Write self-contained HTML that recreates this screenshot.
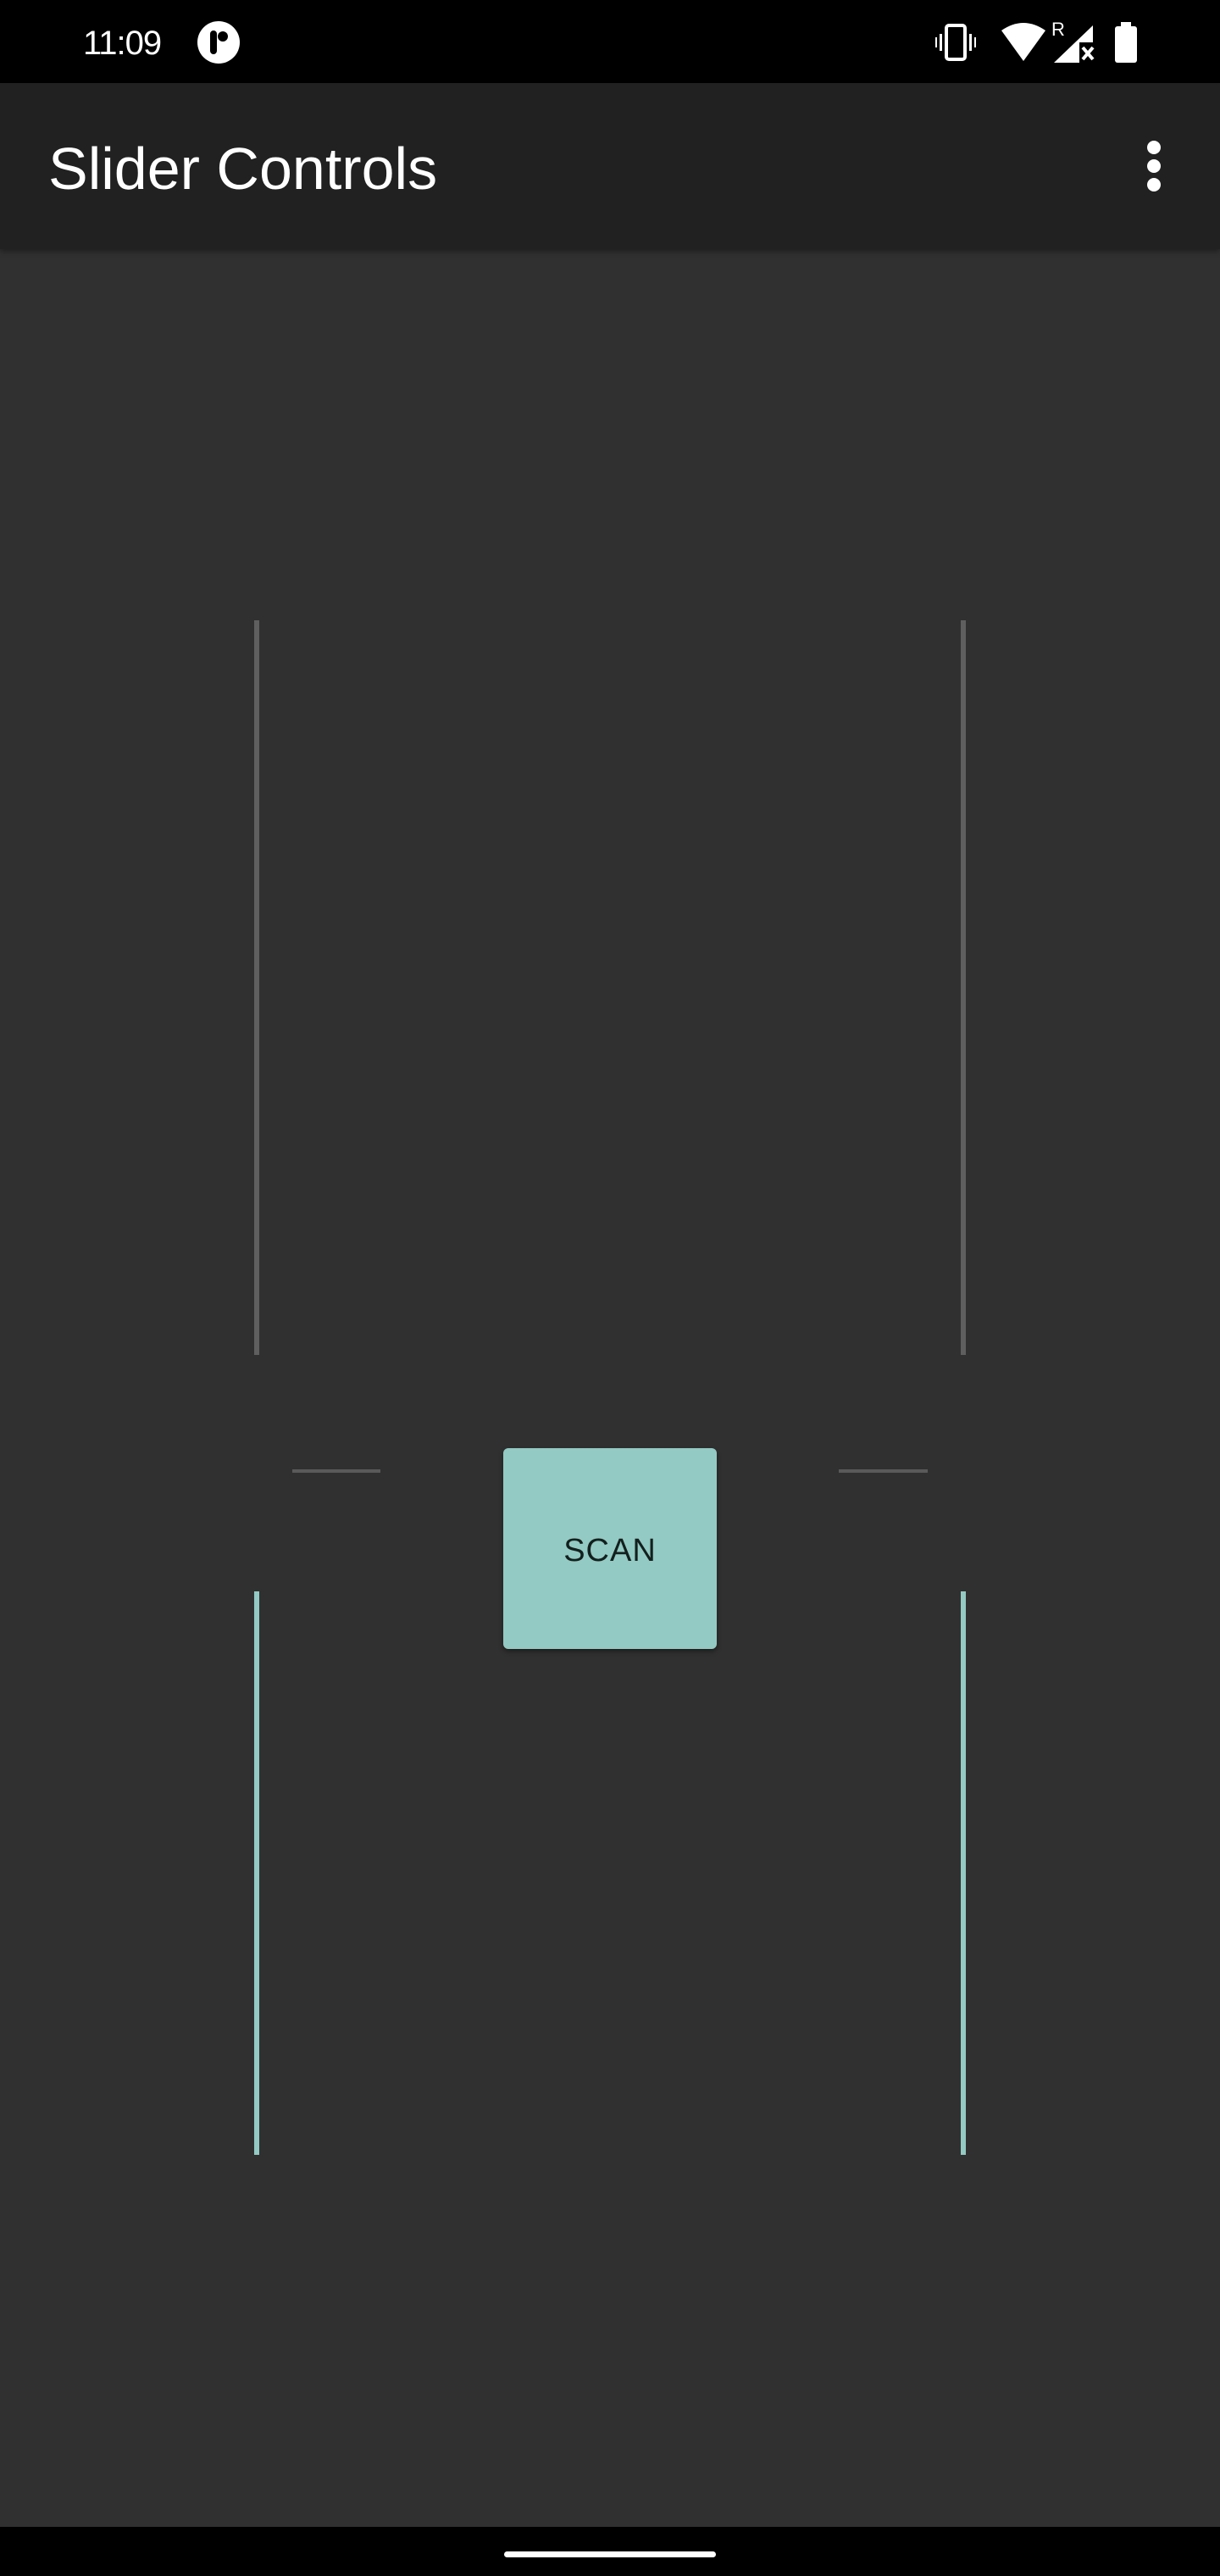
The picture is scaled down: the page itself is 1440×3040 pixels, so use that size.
<!DOCTYPE html>
<html><head><meta charset="utf-8"><style>
html,body{margin:0;padding:0}
body{width:1440px;height:3040px;background:#303030;position:relative;overflow:hidden;font-family:"Liberation Sans",sans-serif}
.a{position:absolute}
</style></head><body>
<div class="a" style="left:0;top:0;width:1440px;height:98px;background:#000"></div>
<div class="a" style="left:98px;top:28px;color:#fff;font-size:40px;line-height:46px;letter-spacing:-1px">11:09</div>
<svg class="a" style="left:232px;top:24px" width="52" height="52" viewBox="0 0 52 52"><circle cx="26" cy="26" r="25" fill="#fff"/><rect x="16" y="12" width="8" height="28" rx="4" fill="#000"/><circle cx="31" cy="19" r="6" fill="#000"/></svg>
<svg class="a" style="left:1104px;top:26px" width="48" height="48" viewBox="0 0 48 48" fill="#fff"><rect x="13" y="4" width="22" height="40" rx="3" fill="none" stroke="#fff" stroke-width="4"/><rect x="5" y="14" width="3" height="20"/><rect x="40" y="14" width="3" height="20"/><rect x="0" y="18" width="2" height="12"/><rect x="46" y="18" width="2" height="12"/></svg>
<svg class="a" style="left:1180px;top:26px" width="56" height="48" viewBox="0 0 56 48"><path d="M2 10 Q28 -8 54 10 L28 46 Z" fill="#fff"/></svg>
<div class="a" style="left:1241px;top:22px;color:#fff;font-size:22px">R</div>
<svg class="a" style="left:1244px;top:30px" width="50" height="44" viewBox="0 0 50 44"><path d="M46 0 L46 20 L30 20 L30 44 L0 44 Z" fill="#fff"/><path d="M34 26 L46 40 M46 26 L34 40" stroke="#fff" stroke-width="4"/></svg>
<svg class="a" style="left:1314px;top:26px" width="30" height="48" viewBox="0 0 30 48"><rect x="9" y="0" width="12" height="6" fill="#fff"/><rect x="2" y="5" width="26" height="43" rx="3" fill="#fff"/></svg>
<div class="a" style="left:0;top:98px;width:1440px;height:196px;background:#212121;box-shadow:0 3px 6px rgba(0,0,0,.35)"></div>
<div class="a" style="left:57px;top:158px;color:#fff;font-size:70px;line-height:82px;font-weight:500">Slider Controls</div>
<svg class="a" style="left:1350px;top:164px" width="24" height="64" viewBox="0 0 24 64" fill="#fff"><circle cx="12" cy="10" r="8"/><circle cx="12" cy="32" r="8"/><circle cx="12" cy="54" r="8"/></svg>
<div class="a" style="left:300px;top:732px;width:6px;height:867px;background:#5f5f5f"></div>
<div class="a" style="left:1134px;top:732px;width:6px;height:867px;background:#5f5f5f"></div>
<div class="a" style="left:300px;top:1878px;width:6px;height:665px;background:#93cac3"></div>
<div class="a" style="left:1134px;top:1878px;width:6px;height:665px;background:#93cac3"></div>
<div class="a" style="left:345px;top:1734px;width:104px;height:4px;background:#5a5a5a"></div>
<div class="a" style="left:990px;top:1734px;width:105px;height:4px;background:#5a5a5a"></div>
<div class="a" style="left:594px;top:1709px;width:252px;height:237px;background:#93cac3;border-radius:6px;box-shadow:0 3px 6px rgba(0,0,0,.4);display:flex;align-items:center;justify-content:center;color:#13201e;font-size:38px;font-weight:500;letter-spacing:1px;padding-top:6px;box-sizing:border-box">SCAN</div>
<div class="a" style="left:0;top:2982px;width:1440px;height:58px;background:#000"></div>
<div class="a" style="left:595px;top:3011px;width:250px;height:7px;border-radius:4px;background:#fff"></div>
</body></html>
